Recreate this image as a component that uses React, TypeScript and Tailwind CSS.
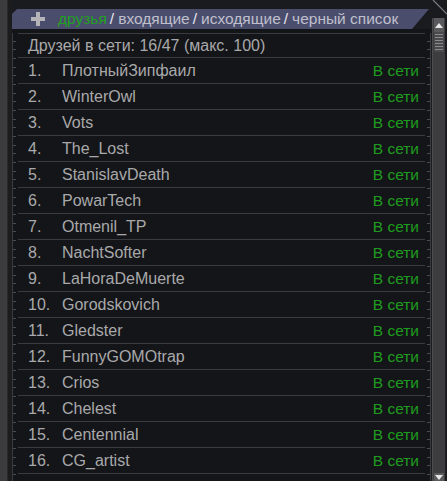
import React from "react";

const friends = [
  "ПлотныйЗипфаил",
  "WinterOwl",
  "Vots",
  "The_Lost",
  "StanislavDeath",
  "PowarTech",
  "Otmenil_TP",
  "NachtSofter",
  "LaHoraDeMuerte",
  "Gorodskovich",
  "Gledster",
  "FunnyGOMOtrap",
  "Crios",
  "Chelest",
  "Centennial",
  "CG_artist",
];

const tabs = ["входящие", "исходящие", "черный список"];

function Ruler({ side }: { side: "left" | "right" }) {
  return (
    <div
      className={`w-[4px] shrink-0 ${side === "left" ? "border-l border-[#3a3b3f]" : "border-r border-[#3a3b3f]"} bg-[repeating-linear-gradient(to_bottom,transparent_0px,transparent_7.6px,#4a4b4f_7.6px,#4a4b4f_8.67px)]`}
    />
  );
}

export default function App() {
  return (
    <div className="relative w-[447px] h-[481px] flex overflow-hidden bg-[#1a1b1f] font-['Liberation_Sans',Arial,sans-serif] text-[16px]">
      {/* left neighbour panel */}
      <div className="w-[8px] shrink-0 bg-[#3c3c3e] border-r border-[#2a2a2c]" />
      <div className="w-[4px] shrink-0 bg-[#1c1c1f]" />

      <div className="flex-1 flex flex-col min-w-0">
        <div className="h-[29px] pt-[9px] shrink-0">
          <div className="h-[20px] mr-[2px] bg-[#4b4d6d] [clip-path:polygon(0_5px,5px_0,100%_0,calc(100%-17px)_100%,0_100%)] flex items-center pl-[19px] leading-none text-[15.5px]">
            <svg width="14" height="14" viewBox="0 0 14 14" className="mr-[13px] shrink-0">
              <rect x="5" y="0" width="4" height="14" fill="#b4b4b8" />
              <rect x="0" y="5" width="14" height="4" fill="#b4b4b8" />
            </svg>
            <span className="text-[#1fa01f]">друзья</span>
            {tabs.map((t) => (
              <React.Fragment key={t}>
                <span className="text-[#e6e6ee] ml-[3px] mr-[4px]">/</span>
                <span className="text-[#bfc0cc]">{t}</span>
              </React.Fragment>
            ))}
          </div>
        </div>

        <div className="flex-1 flex bg-[#141518] pt-[4px]">
          <Ruler side="left" />
          <div className="flex-1 flex flex-col px-[2px] min-w-0">
            <div className="h-[25px] border-y border-[#3a3b3f] flex items-center pl-[10px] text-[#a9a9ab]">
              Друзей в сети: 16/47 (макс. 100)
            </div>
            {friends.map((name, i) => (
              <div
                key={name}
                className="h-[26px] shrink-0 border-b border-[#3a3b3f] flex items-center text-[#a9a9ab]"
              >
                <span className="w-[44px] pl-[10px] shrink-0">{i + 1}.</span>
                <span className="flex-1">{name}</span>
                <span className="text-[#1f9c1f] text-[15.5px] pr-[6px]">В сети</span>
              </div>
            ))}
          </div>
          <Ruler side="right" />
        </div>
      </div>

      {/* scrollbar */}
      <div className="w-[16px] shrink-0 flex flex-col pt-[18px] pr-[2px] pl-[1px] bg-[#1a1b1f]">
        <div className="flex-1 flex flex-col bg-[#3d3d3f] border-l border-[#4d4d50] px-[1px]">
          <div className="h-[14px] bg-[#5a5a5d] flex items-center justify-center shrink-0">
            <svg width="8" height="5" viewBox="0 0 8 5">
              <polygon points="4,0 8,5 0,5" fill="#e6e6e6" />
            </svg>
          </div>
          <div className="h-[20px] bg-[#4a4a4d] flex flex-col justify-center items-center gap-[2px] shrink-0">
            {[0, 1, 2, 3, 4, 5].map((k) => (
              <div key={k} className="w-[8px] h-[1px] bg-[#8a8a8d]" />
            ))}
          </div>
          <div className="flex-1" />
          <div className="h-[8px] bg-[#5a5a5d] flex items-start justify-center shrink-0 pt-[2px]">
            <svg width="8" height="5" viewBox="0 0 8 5">
              <polygon points="0,0 8,0 4,5" fill="#e6e6e6" />
            </svg>
          </div>
        </div>
      </div>

      {/* frame corner line */}
      <svg className="absolute top-0 right-0" width="16" height="16" viewBox="0 0 16 16">
        <line x1="2" y1="0" x2="16" y2="14" stroke="#7a7b85" strokeWidth="1.2" />
      </svg>
    </div>
  );
}
